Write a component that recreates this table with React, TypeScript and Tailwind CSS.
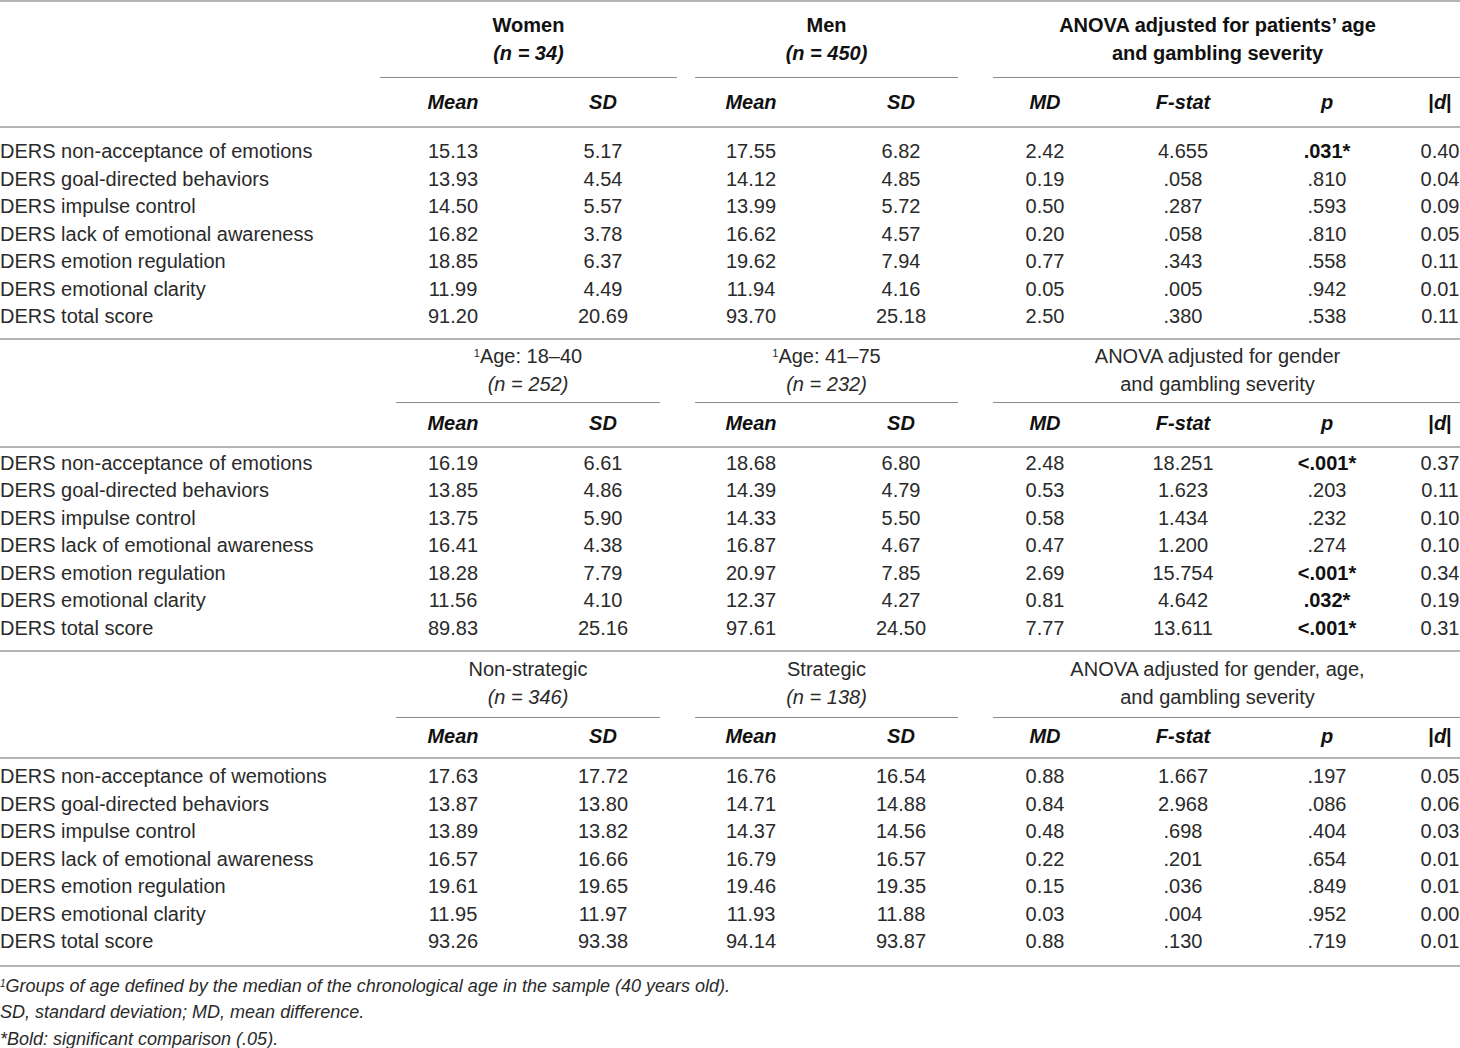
import type { ReactNode } from "react"

type Row = { label: string; vals: string[]; bold?: number[] }

const COLS =
  "grid grid-cols-[380px_146px_154px_142px_158px_130px_146px_142px_62px]"

const SEC1: Row[] = [
  { label: "DERS non-acceptance of emotions", vals: ["15.13", "5.17", "17.55", "6.82", "2.42", "4.655", ".031*", "0.40"], bold: [6] },
  { label: "DERS goal-directed behaviors", vals: ["13.93", "4.54", "14.12", "4.85", "0.19", ".058", ".810", "0.04"] },
  { label: "DERS impulse control", vals: ["14.50", "5.57", "13.99", "5.72", "0.50", ".287", ".593", "0.09"] },
  { label: "DERS lack of emotional awareness", vals: ["16.82", "3.78", "16.62", "4.57", "0.20", ".058", ".810", "0.05"] },
  { label: "DERS emotion regulation", vals: ["18.85", "6.37", "19.62", "7.94", "0.77", ".343", ".558", "0.11"] },
  { label: "DERS emotional clarity", vals: ["11.99", "4.49", "11.94", "4.16", "0.05", ".005", ".942", "0.01"] },
  { label: "DERS total score", vals: ["91.20", "20.69", "93.70", "25.18", "2.50", ".380", ".538", "0.11"] },
]

const SEC2: Row[] = [
  { label: "DERS non-acceptance of emotions", vals: ["16.19", "6.61", "18.68", "6.80", "2.48", "18.251", "<.001*", "0.37"], bold: [6] },
  { label: "DERS goal-directed behaviors", vals: ["13.85", "4.86", "14.39", "4.79", "0.53", "1.623", ".203", "0.11"] },
  { label: "DERS impulse control", vals: ["13.75", "5.90", "14.33", "5.50", "0.58", "1.434", ".232", "0.10"] },
  { label: "DERS lack of emotional awareness", vals: ["16.41", "4.38", "16.87", "4.67", "0.47", "1.200", ".274", "0.10"] },
  { label: "DERS emotion regulation", vals: ["18.28", "7.79", "20.97", "7.85", "2.69", "15.754", "<.001*", "0.34"], bold: [6] },
  { label: "DERS emotional clarity", vals: ["11.56", "4.10", "12.37", "4.27", "0.81", "4.642", ".032*", "0.19"], bold: [6] },
  { label: "DERS total score", vals: ["89.83", "25.16", "97.61", "24.50", "7.77", "13.611", "<.001*", "0.31"], bold: [6] },
]

const SEC3: Row[] = [
  { label: "DERS non-acceptance of wemotions", vals: ["17.63", "17.72", "16.76", "16.54", "0.88", "1.667", ".197", "0.05"] },
  { label: "DERS goal-directed behaviors", vals: ["13.87", "13.80", "14.71", "14.88", "0.84", "2.968", ".086", "0.06"] },
  { label: "DERS impulse control", vals: ["13.89", "13.82", "14.37", "14.56", "0.48", ".698", ".404", "0.03"] },
  { label: "DERS lack of emotional awareness", vals: ["16.57", "16.66", "16.79", "16.57", "0.22", ".201", ".654", "0.01"] },
  { label: "DERS emotion regulation", vals: ["19.61", "19.65", "19.46", "19.35", "0.15", ".036", ".849", "0.01"] },
  { label: "DERS emotional clarity", vals: ["11.95", "11.97", "11.93", "11.88", "0.03", ".004", ".952", "0.00"] },
  { label: "DERS total score", vals: ["93.26", "93.38", "94.14", "93.87", "0.88", ".130", ".719", "0.01"] },
]

function SubHeader({ className }: { className: string }) {
  const heads = ["Mean", "SD", "Mean", "SD", "MD", "F-stat", "p"]
  return (
    <div className={`${COLS} border-b-2 border-[#b4b4b4] leading-[28px] font-bold italic text-[#111] ${className}`}>
      <div />
      {heads.map((h, i) => (
        <div key={i} className="text-center">
          {h}
        </div>
      ))}
      <div className="pl-[22px] text-center">
        <span className="not-italic">|</span>d<span className="not-italic">|</span>
      </div>
    </div>
  )
}

function DataRows({ rows, className }: { rows: Row[]; className: string }) {
  return (
    <div className={className}>
      {rows.map((r) => (
        <div key={r.label} className={`${COLS} h-[27.5px] items-center`}>
          <div className="whitespace-nowrap">{r.label}</div>
          {r.vals.map((v, i) => (
            <div
              key={i}
              className={`text-center ${i === 7 ? "pl-[22px]" : ""} ${r.bold?.includes(i) ? "font-bold text-[#111]" : ""}`}
            >
              {v}
            </div>
          ))}
        </div>
      ))}
    </div>
  )
}

function GroupHeader({
  first,
  second,
  third,
  className,
  wideFirst,
}: {
  first: ReactNode
  second: ReactNode
  third: ReactNode
  className: string
  wideFirst?: boolean
}) {
  return (
    <div className={`${COLS} leading-[28px] ${className}`}>
      <div />
      <div className={`col-span-2 border-b border-[#8a8a8a] text-center ${wideFirst ? "mr-[3px]" : "ml-[16px] mr-[20px]"}`}>
        {first}
      </div>
      <div className="col-span-2 ml-[15px] mr-[22px] border-b border-[#8a8a8a] text-center">
        {second}
      </div>
      <div className="col-span-4 ml-[13px] border-b border-[#8a8a8a] pr-[18px] text-center">
        {third}
      </div>
    </div>
  )
}

export default function App() {
  return (
    <div className="w-[1460px] bg-white font-['Liberation_Sans',Arial,sans-serif] text-[20px] text-[#2a2a2a]">
      {/* section 1: gender */}
      <div className="border-t-2 border-[#b4b4b4]">
        <GroupHeader
          className="pt-[9px] font-bold text-[#111] [&>div]:pb-[10px]"
          wideFirst
          first={
            <>
              Women
              <br />
              <i>(n = 34)</i>
            </>
          }
          second={
            <>
              Men
              <br />
              <i>(n = 450)</i>
            </>
          }
          third={
            <>
              ANOVA adjusted for patients’ age
              <br />
              and gambling severity
            </>
          }
        />
        <SubHeader className="pt-[10px] pb-[10px]" />
        <DataRows rows={SEC1} className="border-b-2 border-[#b4b4b4] pt-[8px] pb-[9px]" />
      </div>

      {/* section 2: age */}
      <GroupHeader
        className="pt-[2px] [&>div]:pb-[4px]"
        first={
          <>
            <sup className="text-[11px]">1</sup>Age: 18–40
            <br />
            <i>(n = 252)</i>
          </>
        }
        second={
          <>
            <sup className="text-[11px]">1</sup>Age: 41–75
            <br />
            <i>(n = 232)</i>
          </>
        }
        third={
          <>
            ANOVA adjusted for gender
            <br />
            and gambling severity
          </>
        }
      />
      <SubHeader className="pt-[6px] pb-[9px]" />
      <DataRows rows={SEC2} className="border-b-2 border-[#b4b4b4] pt-0 pb-[10px]" />

      {/* section 3: strategy */}
      <GroupHeader
        className="pt-[3px] [&>div]:pb-[6px]"
        first={
          <>
            Non-strategic
            <br />
            <i>(n = 346)</i>
          </>
        }
        second={
          <>
            Strategic
            <br />
            <i>(n = 138)</i>
          </>
        }
        third={
          <>
            ANOVA adjusted for gender, age,
            <br />
            and gambling severity
          </>
        }
      />
      <SubHeader className="pt-[4px] pb-[7px]" />
      <DataRows rows={SEC3} className="border-b-2 border-[#b4b4b4] pt-[2px] pb-[11px]" />

      <div className="pt-[6px] text-[18px] italic leading-[26.5px] text-[#2a2a2a]">
        <p>
          <sup className="text-[10px]">1</sup>Groups of age defined by the median of the chronological age in the sample (40 years old).
        </p>
        <p>SD, standard deviation; MD, mean difference.</p>
        <p>*Bold: significant comparison (.05).</p>
      </div>
    </div>
  )
}
